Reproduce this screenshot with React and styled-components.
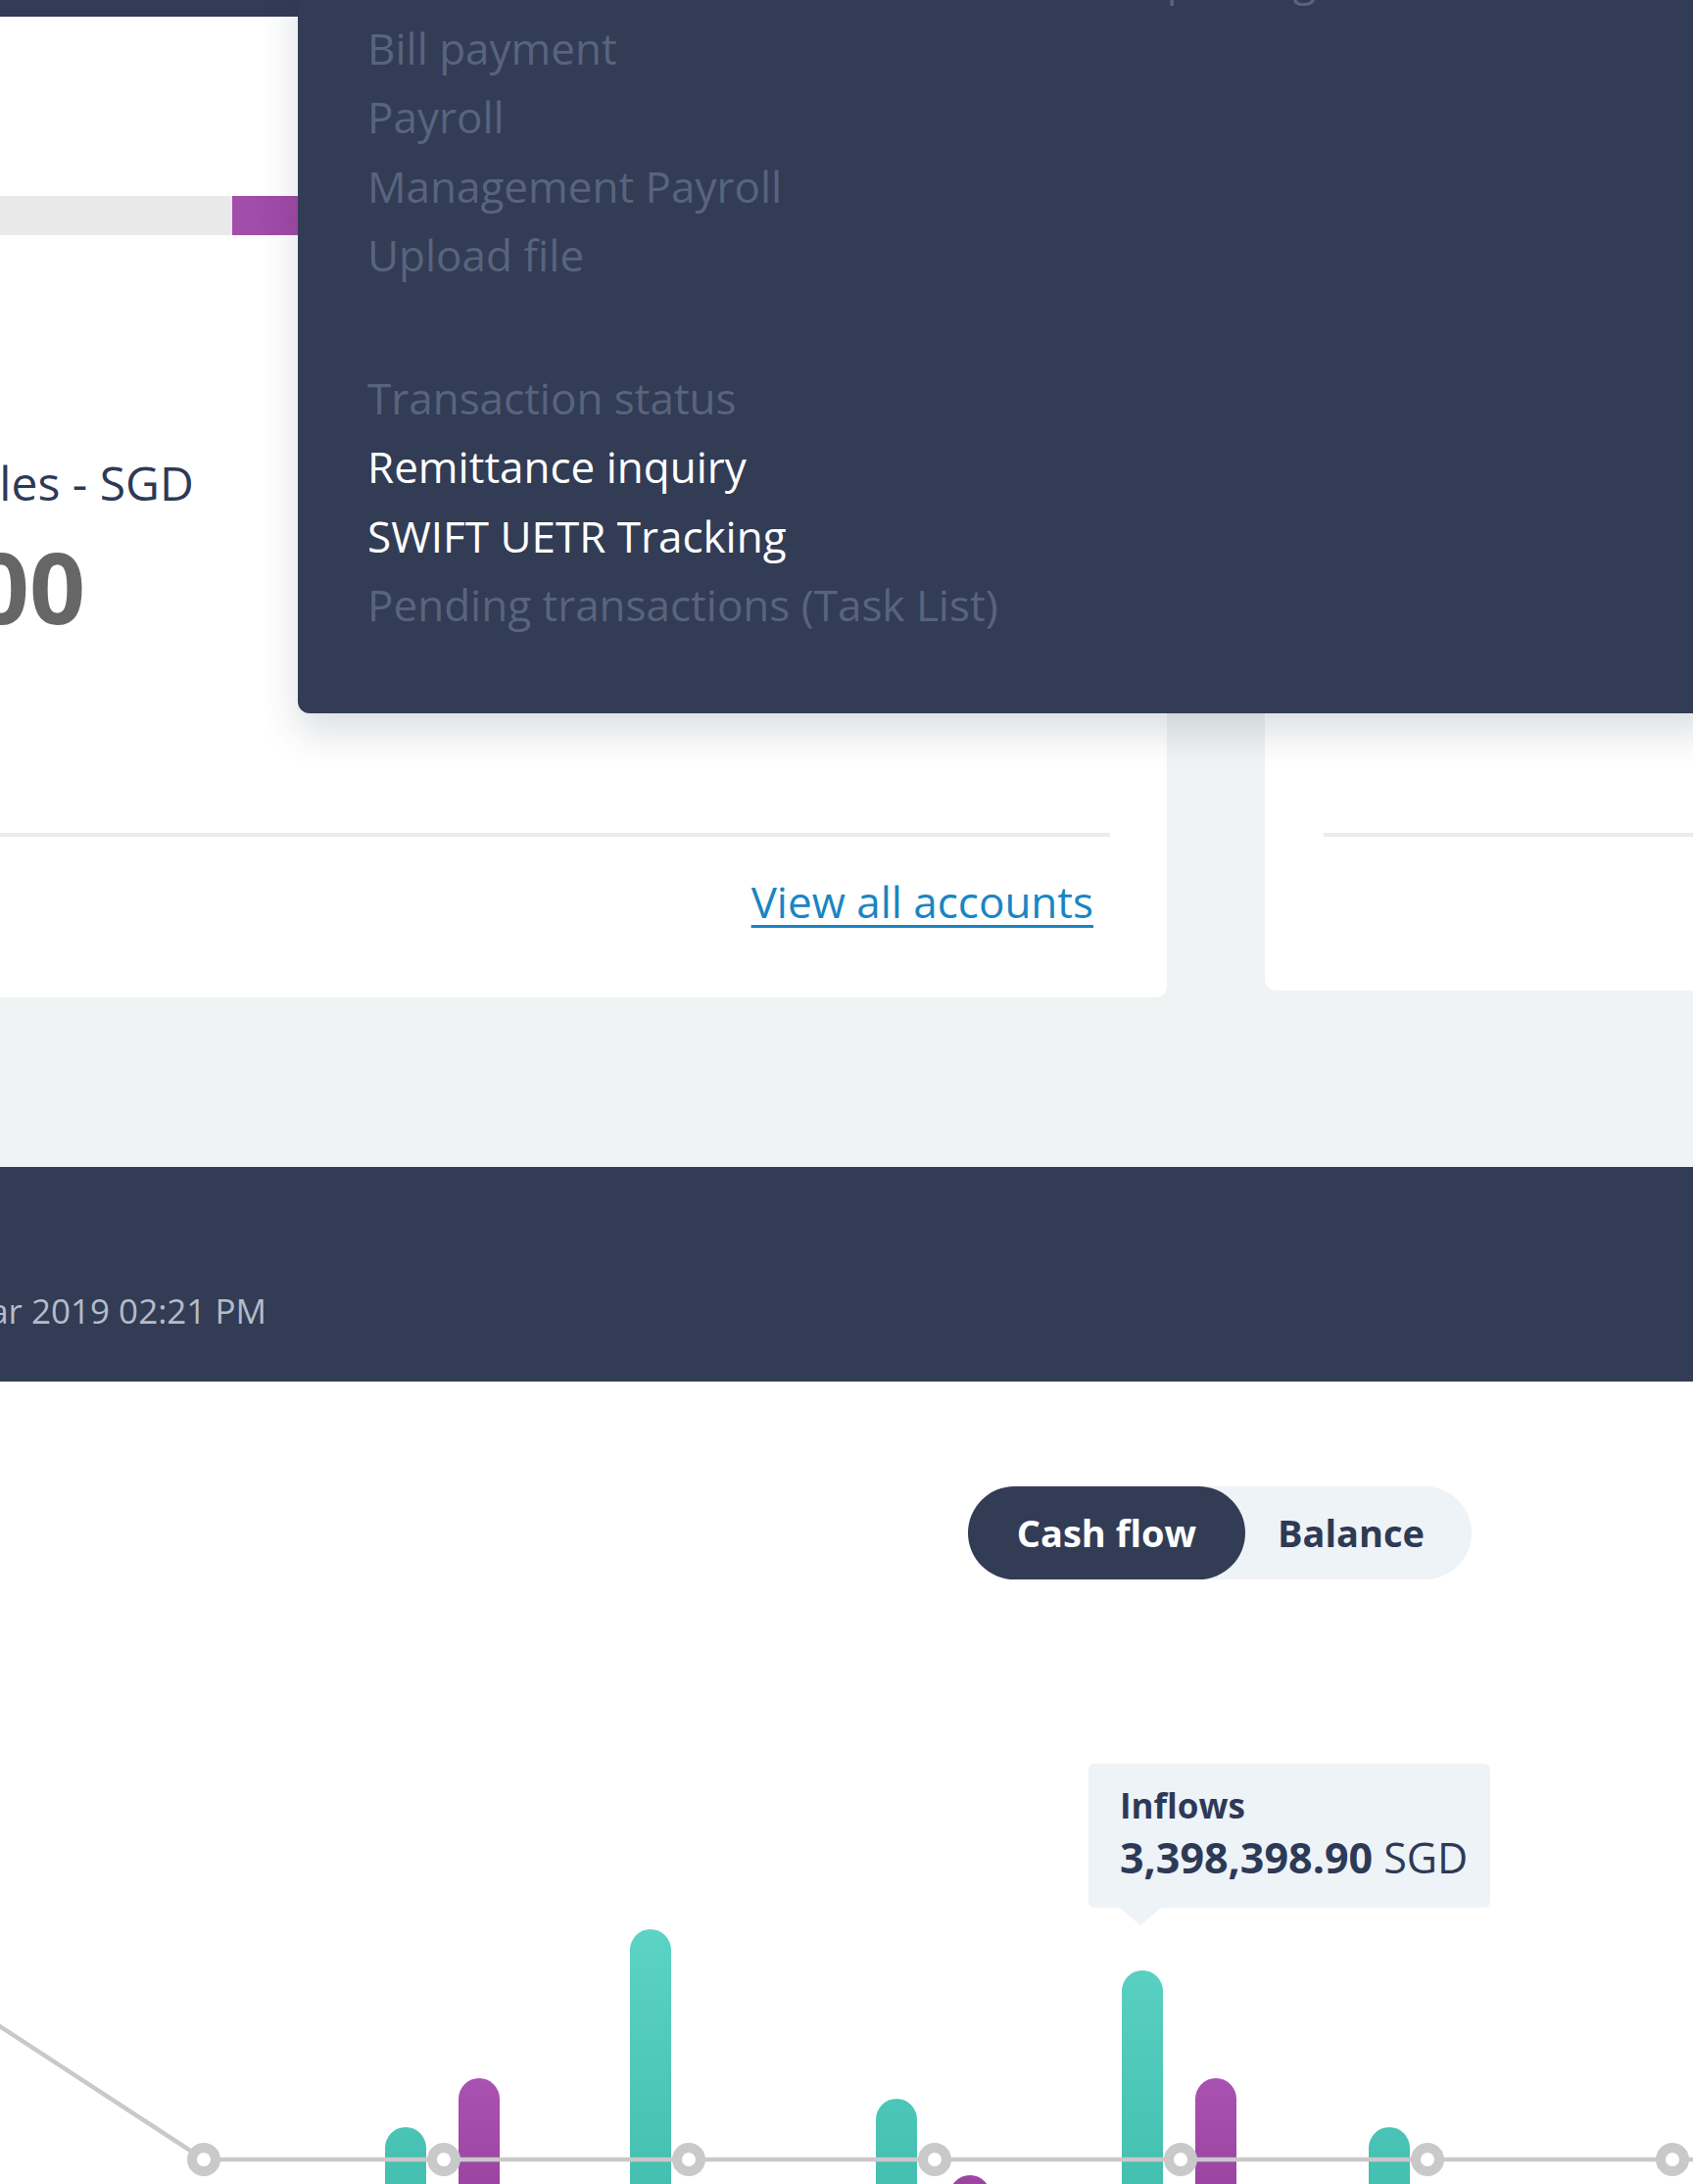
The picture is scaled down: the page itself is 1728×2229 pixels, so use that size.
import React from "react";
import styled, { createGlobalStyle } from "styled-components";

const S = 373; // horizontal scroll offset of the page
const NAVY = "#323c55";
const FONT = `"Open Sans", "Noto Sans", "Liberation Sans", sans-serif`;

const Global = createGlobalStyle`
  html, body { margin: 0; padding: 0; background: #ffffff; }
  body { font-family: ${FONT}; overflow: hidden; }
  * { box-sizing: border-box; }
`;

const Screen = styled.div`
  position: relative;
  width: 1728px;
  height: 2229px;
  overflow: hidden;
  background: #ffffff;
`;

const Canvas = styled.div`
  margin-left: -${S}px;
  width: ${1728 + S}px;
`;

const NavStrip = styled.div`
  height: 17px;
  background: ${NAVY};
`;

const Overview = styled.section`
  background: #eff3f4;
  padding-bottom: 173px;
`;

const CardsRow = styled.div`
  display: grid;
  grid-template-columns: ${1191 + S}px 800px;
  column-gap: 100px;
  align-items: start;
`;

const Card = styled.div`
  background: #ffffff;
  height: ${(p) => p.$h}px;
  border-radius: 0 0 12px 12px;
  display: flex;
  flex-direction: column;
  padding: 0 58px 0 60px;
`;

const CardBody = styled.div`
  height: 833px;
  padding-top: 183px;
  display: flex;
  flex-direction: column;
`;

const Progress = styled.div`
  display: flex;
  height: 40px;
  background: #e9e9e9;
`;

const Segment = styled.div`
  height: 100%;
  background: ${(p) => p.$bg};
`;

const Label = styled.div`
  margin-top: 222px;
  font-size: 48px;
  line-height: 62px;
  color: #2d3a56;
  white-space: nowrap;
`;

const Amount = styled.div`
  margin-top: 6px;
  font-size: 100px;
  line-height: 136px;
  font-weight: 700;
  color: #666666;
  white-space: nowrap;
`;

const Divider = styled.div`
  height: 4px;
  background: #ebebeb;
  flex-shrink: 0;
`;

const CardFooter = styled.div`
  display: flex;
  justify-content: flex-end;
  padding: 36px 17px 0 0;
`;

const Link = styled.a`
  font-size: 44px;
  line-height: 60px;
  color: #1a85c3;
  text-decoration: underline;
  text-decoration-thickness: 3px;
  text-underline-offset: 7px;
  cursor: pointer;
`;

const Band = styled.section`
  height: 219px;
  background: ${NAVY};
  padding: 124px 0 0 50px;
`;

const Updated = styled.div`
  font-size: 35px;
  line-height: 46px;
  color: #b4bbc9;
  white-space: nowrap;
`;

const ChartSection = styled.section`
  background: #ffffff;
  padding-top: 107px;
`;

const ToggleRow = styled.div`
  display: flex;
  justify-content: flex-end;
  padding-right: 226px;
`;

const Toggle = styled.div`
  display: inline-flex;
  height: 95px;
  background: #eef3f8;
  border-radius: 48px;
`;

const ToggleBtn = styled.button`
  border: 0;
  margin: 0;
  height: 100%;
  border-radius: 48px;
  font-family: ${FONT};
  font-size: 38px;
  line-height: 95px;
  font-weight: 700;
  padding: ${(p) => (p.$active ? "0 50px" : "0 48px 0 33px")};
  background: ${(p) => (p.$active ? NAVY : "transparent")};
  color: ${(p) => (p.$active ? "#ffffff" : "#2f3a54")};
`;

const ChartWrap = styled.div`
  position: relative;
  height: 640px;
`;

const Tooltip = styled.div`
  position: absolute;
  left: ${1111 + S}px;
  top: 188px;
  width: 410px;
  height: 147px;
  background: #eef3f8;
  border-radius: 6px;
  padding: 19px 32px 0;
  color: #2d3a56;
  &::after {
    content: "";
    position: absolute;
    left: 32px;
    top: 100%;
    border-left: 21px solid transparent;
    border-right: 21px solid transparent;
    border-top: 18px solid #eef3f8;
  }
`;

const TipTitle = styled.div`
  font-size: 35px;
  line-height: 47px;
  font-weight: 700;
`;

const TipValue = styled.div`
  margin-top: 1px;
  font-size: 43px;
  line-height: 58px;
  white-space: nowrap;
  b { font-weight: 700; }
`;

const Dropdown = styled.nav`
  position: absolute;
  left: 304px;
  right: -20px;
  top: -97px;
  background: ${NAVY};
  border-radius: 0 0 0 12px;
  box-shadow: 0 20px 38px rgba(40, 50, 70, 0.16);
  padding: 40px 0 75px 71px;
  display: grid;
  grid-template-columns: 704px 1fr;
`;

const MenuCol = styled.ul`
  list-style: none;
  margin: 0;
  padding: 0;
`;

const MenuItem = styled.li`
  font-size: 44px;
  line-height: 70.5px;
  height: ${(p) => (p.$gap ? 75 : 70.5)}px;
  color: ${(p) => (p.$active ? "#ffffff" : "#58647d")};
  white-space: nowrap;
`;

const col1 = [
  { t: "Fund transfer" },
  { t: "Bill payment" },
  { t: "Payroll" },
  { t: "Management Payroll" },
  { t: "Upload file" },
  { gap: true },
  { t: "Transaction status" },
  { t: "Remittance inquiry", active: true },
  { t: "SWIFT UETR Tracking", active: true },
  { t: "Pending transactions (Task List)" },
];
const col2 = [{ t: "Cash pooling" }];

const segments = [
  { bg: "#e9e9e9", w: 550 },
  { bg: "linear-gradient(90deg, #a24eab, #8a3491)", w: 360 },
  { bg: "#4fc9bb", w: 300 },
];

const RINGS = [208, 453, 703, 954, 1205, 1457, 1707];
const BASE = 592;
const bars = [
  { i: 1, kind: "teal", top: 2171 },
  { i: 1, kind: "purple", top: 2121 },
  { i: 2, kind: "teal", top: 1969 },
  { i: 3, kind: "teal", top: 2142 },
  { i: 3, kind: "purple", top: 2220 },
  { i: 4, kind: "teal", top: 2011 },
  { i: 4, kind: "purple", top: 2121 },
  { i: 5, kind: "teal", top: 2171 },
];

function barPath(x, top) {
  const w = 42;
  const r = 21;
  const bottom = 700;
  return `M${x},${bottom} V${top + r} A${r},${r} 0 0 1 ${x + w},${top + r} V${bottom} Z`;
}

function Chart() {
  const oy = 1612;
  return (
    <svg
      width={1728 + S}
      height={640}
      viewBox={`${-S} 0 ${1728 + S} 640`}
      style={{ display: "block" }}
    >
      <defs>
        <linearGradient id="tealG" x1="0" y1="350" x2="0" y2="620" gradientUnits="userSpaceOnUse">
          <stop offset="0" stopColor="#5cd4c7" />
          <stop offset="1" stopColor="#44bfb0" />
        </linearGradient>
        <linearGradient id="purpleG" x1="0" y1="500" x2="0" y2="620" gradientUnits="userSpaceOnUse">
          <stop offset="0" stopColor="#ab53b2" />
          <stop offset="1" stopColor="#9b44a2" />
        </linearGradient>
      </defs>
      {bars.map((b, k) => {
        const x = b.kind === "teal" ? RINGS[b.i] - 60 : RINGS[b.i] + 15;
        return (
          <path
            key={k}
            d={barPath(x, b.top - oy)}
            fill={b.kind === "teal" ? "url(#tealG)" : "url(#purpleG)"}
          />
        );
      })}
      <polyline
        points={`-40,430 ${RINGS[0]},${BASE} ${1760},${BASE}`}
        fill="none"
        stroke="#c9c9c9"
        strokeWidth="4.5"
      />
      {RINGS.map((x) => (
        <circle key={x} cx={x} cy={BASE} r="12" fill="#ffffff" stroke="#c9c9c9" strokeWidth="10" />
      ))}
    </svg>
  );
}

export default function App() {
  return (
    <Screen>
      <Global />
      <Canvas>
        <NavStrip />
        <Overview>
          <CardsRow>
            <Card $h={1001}>
              <CardBody>
                <Progress>
                  {segments.map((s, i) => (
                    <Segment key={i} $bg={s.bg} style={{ width: s.w }} />
                  ))}
                </Progress>
                <Label>Total receivables - SGD</Label>
                <Amount>2,500.00</Amount>
              </CardBody>
              <Divider />
              <CardFooter>
                <Link>View all accounts</Link>
              </CardFooter>
            </Card>
            <Card $h={994}>
              <CardBody />
              <Divider />
            </Card>
          </CardsRow>
        </Overview>
        <Band>
          <Updated>Last updated: 25 Mar 2019 02:21 PM</Updated>
        </Band>
        <ChartSection>
          <ToggleRow>
            <Toggle>
              <ToggleBtn $active>Cash flow</ToggleBtn>
              <ToggleBtn>Balance</ToggleBtn>
            </Toggle>
          </ToggleRow>
          <ChartWrap>
            <Chart />
            <Tooltip>
              <TipTitle>Inflows</TipTitle>
              <TipValue>
                <b>3,398,398.90</b> SGD
              </TipValue>
            </Tooltip>
          </ChartWrap>
        </ChartSection>
      </Canvas>
      <Dropdown>
        <MenuCol>
          {col1.map((m, i) => (
            <MenuItem key={i} $gap={m.gap} $active={m.active}>
              {m.t}
            </MenuItem>
          ))}
        </MenuCol>
        <MenuCol>
          {col2.map((m, i) => (
            <MenuItem key={i}>{m.t}</MenuItem>
          ))}
        </MenuCol>
      </Dropdown>
    </Screen>
  );
}
